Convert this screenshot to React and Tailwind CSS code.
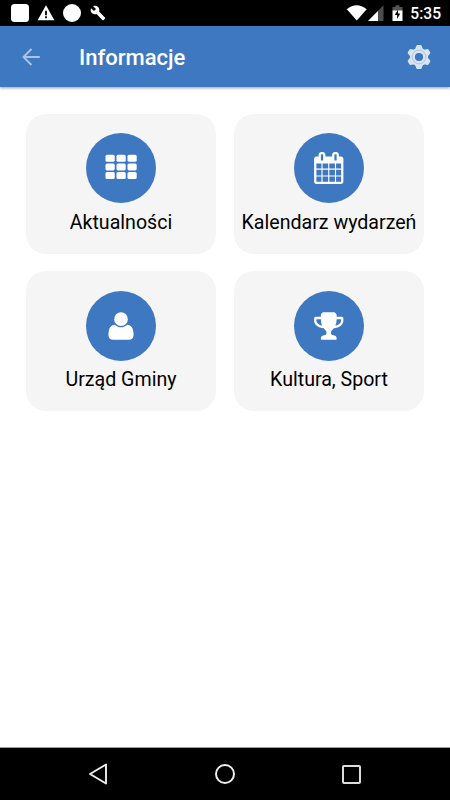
const CalendarIcon = () => (
  <svg viewBox="0 0 1792 1792" preserveAspectRatio="none" className="h-8 w-[31.5px] fill-white">
    <path d="M192 1664h288v-288h-288v288zm352 0h320v-288h-320v288zm-352-352h288v-320h-288v320zm352 0h320v-320h-320v320zm-352-384h288v-288h-288v288zm736 736h320v-288h-320v288zm-384-736h320v-288h-320v288zm768 736h288v-288h-288v288zm-384-352h320v-320h-320v320zm-352-864v-288q0-13-9.5-22.5t-22.5-9.5h-64q-13 0-22.5 9.5t-9.5 22.5v288q0 13 9.5 22.5t22.5 9.5h64q13 0 22.5-9.5t9.5-22.5zm736 864h288v-320h-288v320zm-384-384h320v-288h-320v288zm384 0h288v-288h-288v288zm32-480v-288q0-13-9.5-22.5t-22.5-9.5h-64q-13 0-22.5 9.5t-9.5 22.5v288q0 13 9.5 22.5t22.5 9.5h64q13 0 22.5-9.5t9.5-22.5zm384-64v1280q0 52-38 90t-90 38h-1408q-52 0-90-38t-38-90v-1280q0-52 38-90t90-38h128v-96q0-66 47-113t113-47h64q66 0 113 47t47 113v96h384v-96q0-66 47-113t113-47h64q66 0 113 47t47 113v96h128q52 0 90 38t38 90z" />
  </svg>
);

const TrophyIcon = () => (
  <svg viewBox="0 0 1792 1792" preserveAspectRatio="none" className="h-8 w-[31.5px] fill-white">
    <path d="M522 883q-74-162-74-371h-256v96q0 78 94.5 162t235.5 113zm1078-275v-96h-256q0 209-74 371 141-29 235.5-113t94.5-162zm128-128v128q0 71-41.5 143t-112 130-173 97.5-215.5 44.5q-42 54-95 95-38 34-52.5 72.5t-14.5 89.5q0 54 30.5 91t97.5 37q75 0 133.5 45.5t58.5 114.5v64q0 14-9 23t-23 9h-832q-14 0-23-9t-9-23v-64q0-69 58.5-114.5t133.5-45.5q67 0 97.5-37t30.5-91q0-51-14.5-89.5t-52.5-72.5q-53-41-95-95-113-5-215.5-44.5t-173-97.5-112-130-41.5-143v-128q0-40 28-68t68-28h288v-96q0-66 47-113t113-47h576q66 0 113 47t47 113v96h288q40 0 68 28t28 68z" />
  </svg>
);

const UserIcon = () => (
  <svg viewBox="64 0 1792 1792" className="size-8 fill-white">
    <path d="M1664 1405q0 120-73 189.5t-194 69.5h-874q-121 0-194-69.5t-73-189.5q0-53 3.5-103.5t14-109 26.5-108.5 43-97.5 62-81 85.5-53.5 111.5-20q9 0 42 21.5t74.5 48 108 48 133.5 21.5 133.5-21.5 108-48 74.5-48 42-21.5q61 0 111.5 20t85.5 53.5 62 81 43 97.5 26.5 108.5 14 109 3.5 103.5zm-320-893q0 159-112.5 271.5t-271.5 112.5-271.5-112.5-112.5-271.5 112.5-271.5 271.5-112.5 271.5 112.5 112.5 271.5z" />
  </svg>
);

const GridIcon = () => (
  <svg viewBox="0 0 32 26" className="mb-[1.5px] h-[26px] w-8 fill-white">
    {[0.8, 9.4, 18].map((y) =>
      [0.5, 11.5, 22.5].map((x) => (
        <rect key={`${x}-${y}`} x={x} y={y} width="9.2" height="7" rx="1.6" />
      ))
    )}
  </svg>
);

const GearIcon = () => (
  <svg viewBox="-13 -13 26 26" className="size-[26px]">
    <g className="fill-[#d8e4f3]">
      <circle r="9" />
      {[0, 60, 120, 180, 240, 300].map((a) => (
        <path
          key={a}
          transform={`rotate(${a})`}
          d="M-5-7Q-3.2-8.5-2.900-10.500Q-2.700-12-1.500-12H1.500Q2.700-12 2.900-10.500Q3.200-8.500 5-7Z"
        />
      ))}
    </g>
    <circle r="6.9" className="fill-none stroke-[#9fbce2]" strokeWidth="0.8" />
    <circle r="4.1" className="fill-[#3e78c0]" />
  </svg>
);

const tiles = [
  { label: "Aktualności", Icon: GridIcon },
  { label: "Kalendarz wydarzeń", Icon: CalendarIcon },
  { label: "Urząd Gminy", Icon: UserIcon },
  { label: "Kultura, Sport", Icon: TrophyIcon },
];

function StatusBar() {
  return (
    <div className="flex h-[26px] shrink-0 items-center bg-black pr-[9px] pl-[10.5px] text-white">
      <div className="size-[18px] rounded-[3.5px] bg-white" />
      <svg viewBox="0 0 18 16" className="ml-[8.5px] h-4 w-[18px]">
        <path d="M9 .3 17.4 15.2H.6Z" className="fill-white" />
        <path d="M8.1 5.8h1.8v4.4H8.1zM8.1 11.3h1.8v1.9H8.1z" className="fill-black" />
      </svg>
      <div className="ml-2 size-[18px] rounded-full bg-white" />
      <svg viewBox="0 0 24 24" className="ml-[9px] size-4 fill-white">
        <path d="M22.7 19l-9.1-9.1c.9-2.3.4-5-1.5-6.9-2-2-5-2.4-7.4-1.3L9 6 6 9 1.6 4.7C.4 7.1.9 10.1 2.9 12.1c1.9 1.9 4.6 2.4 6.9 1.5l9.1 9.1c.4.4 1 .4 1.4 0l2.3-2.3c.5-.4.5-1.1.1-1.4z" />
      </svg>
      <svg viewBox="0 0 58 18" className="ml-auto h-[18px] w-[58px]">
        <path d="M.8 5.2Q10.500 -2.800 20.700 5.200L10.800 16.600Z" className="fill-white" />
        <path d="M37.500 1.300V17H22Z" className="fill-[#4d4d4d]" />
        <path d="M32 6.900V17H22Z" className="fill-white" />
        <path d="M46.500 7V3h3V1.300h4V3h3v4Z" className="fill-[#555]" />
        <path d="M46.500 6.500h10V17h-10Z" className="fill-white" />
        <path d="M52 5.500 48.800 11h2.300v4L54.300 9.500H52Z" className="fill-black" />
      </svg>
      <span className="ml-[6px] pt-[3px] text-[15.6px] leading-none font-medium">5:35</span>
    </div>
  );
}

export default function App() {
  return (
    <div className="flex h-[800px] w-[450px] flex-col overflow-hidden bg-white font-['Roboto',sans-serif]">
      <StatusBar />
      <header className="flex h-[61px] shrink-0 items-center bg-[#3e78c0] pr-[18px] pl-[21px] text-white shadow-[0_1px_3px_rgba(0,0,0,0.4)]">
        <svg viewBox="0 0 20 18" className="h-[18px] w-5 fill-none stroke-[#a9c4e8]" strokeWidth="1.9">
          <path d="M18.8 9H2.5M10.5 1 2.5 9l8 8" />
        </svg>
        <h1 className="ml-[38px] pt-[2px] text-[22px] leading-none font-medium">Informacje</h1>
        <div className="ml-auto">
          <GearIcon />
        </div>
      </header>
      <main className="grid flex-1 auto-rows-[140px] grid-cols-[190px_190px] content-start justify-center gap-x-[18px] gap-y-[17.5px] pt-[26.5px]">
        {tiles.map(({ label, Icon }) => (
          <div key={label} className="flex flex-col items-center rounded-[20px] bg-[#f5f5f5] pt-[19.5px]">
            <div className="flex size-[70px] items-center justify-center rounded-full bg-[#3e78c0]">
              <Icon />
            </div>
            <span className="mt-[7.8px] text-[19.6px] leading-6 whitespace-nowrap text-black">{label}</span>
          </div>
        ))}
      </main>
      <nav className="flex h-[53px] shrink-0 items-center justify-between border-t border-[#999] bg-black pr-[88px] pl-[88px]">
        <svg viewBox="0 0 20 22" className="h-[22px] w-5 fill-none stroke-[#eee]" strokeWidth="1.9" strokeLinejoin="round">
          <path d="M18 1.5V20.5L2 11Z" />
        </svg>
        <div className="size-5 rounded-full border-2 border-[#eee]" />
        <div className="mr-px size-[19px] rounded-[2px] border-2 border-[#ddd]" />
      </nav>
    </div>
  );
}
